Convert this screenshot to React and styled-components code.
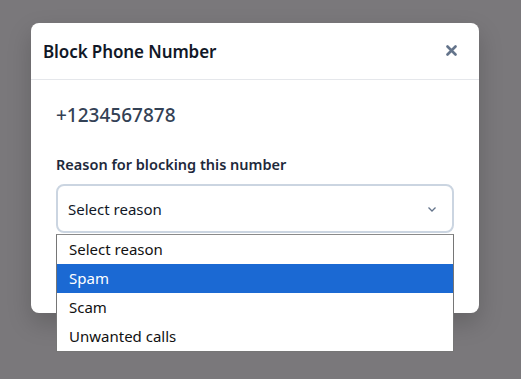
import React, {useState} from 'react';
import styled, {createGlobalStyle} from 'styled-components';

const GlobalStyle = createGlobalStyle`
  html, body {
    margin: 0;
    padding: 0;
    background: #7a787b;
    font-family: "Noto Sans", "Open Sans", sans-serif;
  }
  * { box-sizing: border-box; }
`

const Overlay = styled.div`
  width: 521px;
  height: 379px;
  background: #7a787b;
  padding: 23px 42px 0 31px;
  overflow: hidden;
`
const Modal = styled.div`
  width: 448px;
  height: 290px;
  background: #fff;
  border-radius: 8px;
  box-shadow: 0 10px 25px rgba(0, 0, 0, 0.18);
`
const Header = styled.div`
  display: flex;
  align-items: center;
  justify-content: space-between;
  height: 57px;
  padding: 0 20px 0 12px;
  border-bottom: 1px solid #e5e7eb;
`
const Title = styled.h2`
  margin: 0;
  font-size: 17px;
  font-weight: 600;
  color: #111827;
  letter-spacing: -0.1px;
`
const CloseButton = styled.button`
  appearance: none;
  border: 0;
  background: none;
  padding: 0;
  width: 16px;
  height: 16px;
  display: flex;
  align-items: center;
  justify-content: center;
  cursor: pointer;
  color: #64748b;
  margin-top: -2px;
`
const Body = styled.div`
  padding: 22px 25px 0;
`
const Phone = styled.div`
  font-size: 19px;
  font-weight: 500;
  color: #334155;
  line-height: 26px;
`
const Label = styled.label`
  display: block;
  margin-top: 26px;
  font-size: 14.5px;
  font-weight: 600;
  color: #1e293b;
  line-height: 20px;
`
const SelectWrap = styled.div`
  position: relative;
  margin-top: 10px;
`
const SelectBox = styled.div`
  height: 49px;
  border: 2px solid #cbd5e1;
  border-radius: 8px;
  display: flex;
  align-items: center;
  justify-content: space-between;
  padding: 0 14px 0 10px;
  font-size: 15px;
  color: #111827;
  background: #fff;
`
const Chevron = styled.svg`
  width: 12px;
  height: 12px;
  color: #64748b;
`
const OptionList = styled.ul`
  position: absolute;
  top: 50px;
  left: 0;
  right: 0;
  margin: 0;
  padding: 0;
  list-style: none;
  background: #fff;
  border: 1px solid #767676;
  border-top-color: #8a8a8a;
  z-index: 2;
`
const Option = styled.li`
  height: 29px;
  line-height: 29px;
  padding: 0 12px;
  font-size: 15px;
  color: ${p => p.$active ? '#fff' : '#111'};
  background: ${p => p.$active ? '#1b69d3' : '#fff'};
`

const reasons = ['Select reason', 'Spam', 'Scam', 'Unwanted calls'];

export default function App() {
  const [hovered] = useState('Spam');

  return (
    <React.Fragment>
      <GlobalStyle />
      <Overlay>
        <Modal>
          <Header>
            <Title>Block Phone Number</Title>
            <CloseButton type='button' aria-label='Close'>
              <svg width='11' height='11' viewBox='0 0 11 11'>
                <path d='M1.5 1.5L9.5 9.5M9.5 1.5L1.5 9.5' stroke='currentColor' strokeWidth='2.6' strokeLinecap='round' />
              </svg>
            </CloseButton>
          </Header>
          <Body>
            <Phone>+1234567878</Phone>
            <Label>Reason for blocking this number</Label>
            <SelectWrap>
              <SelectBox>
                <span>Select reason</span>
                <Chevron viewBox='0 0 12 12'>
                  <path d='M2.5 4.5L6 8L9.5 4.5' fill='none' stroke='currentColor' strokeWidth='1.3' />
                </Chevron>
              </SelectBox>
              <OptionList>
                {reasons.map((r) => (
                  <Option key={r} $active={r === hovered}>{r}</Option>
                ))}
              </OptionList>
            </SelectWrap>
          </Body>
        </Modal>
      </Overlay>
    </React.Fragment>
  );
}
